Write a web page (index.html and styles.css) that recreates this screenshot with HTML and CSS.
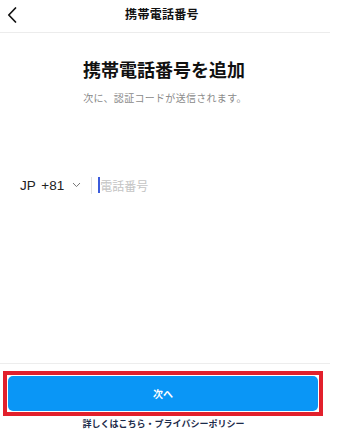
FILE: index.html
```html
<!DOCTYPE html>
<html lang="ja">
<head>
<meta charset="utf-8">
<link rel="stylesheet" href="styles.css">
</head>
<body>
<div class="page">
  <header class="topbar">
    <svg class="back" width="10" height="16" viewBox="0 0 10 16"><path d="M8.5 1 L1.8 8 L8.5 15" fill="none" stroke="#111" stroke-width="1.7" stroke-linecap="round" stroke-linejoin="round"/></svg>
    <div class="title">携帯電話番号</div>
  </header>
  <main class="content">
    <h1 class="heading">携帯電話番号を追加</h1>
    <p class="sub">次に、認証コードが送信されます。</p>
    <div class="phone">
      <span class="cc">JP +81</span>
      <svg class="chev" width="9" height="6" viewBox="0 0 9 6"><path d="M1 1 L4.5 4.6 L8 1" fill="none" stroke="#777" stroke-width="1"/></svg>
      <span class="sep"></span>
      <span class="caret"></span>
      <span class="ph">電話番号</span>
    </div>
  </main>
  <footer class="bottom">
    <div class="hl">
      <button class="next">次へ</button>
    </div>
    <div class="links">詳しくはこちら・プライバシーポリシー</div>
  </footer>
</div>
</body>
</html>
```
FILE: styles.css
```css
html, body {
  margin: 0;
  padding: 0;
  background: #fff;
}
body {
  font-family: "Liberation Sans", "Noto Sans CJK JP", sans-serif;
  color: #111;
}
.page {
  width: 340px;
  height: 438px;
  display: flex;
  flex-direction: column;
}
.topbar {
  position: relative;
  height: 32px;
  width: 330px;
  border-bottom: 1px solid #ececec;
  display: flex;
  align-items: center;
  justify-content: center;
}
.back {
  position: absolute;
  left: 7px;
  top: 7px;
}
.title {
  font-size: 12px;
  font-weight: bold;
  letter-spacing: 0.3px;
  margin-top: -6px;
  margin-left: -6px;
}
.content {
  flex: 1;
  width: 330px;
  display: flex;
  flex-direction: column;
}
.heading {
  margin: 26px 0 0;
  text-align: center;
  font-size: 18px;
  line-height: 24px;
  font-weight: bold;
  margin-left: -2px;
}
.sub {
  margin: 9px 0 0;
  text-align: center;
  font-size: 10px;
  line-height: 14px;
  color: #8a8a8a;
  letter-spacing: 0.3px;
}
.phone {
  margin-top: 69px;
  height: 20px;
  display: flex;
  align-items: center;
  padding-left: 20px;
}
.cc {
  font-size: 13.5px;
  color: #222;
  word-spacing: 2px;
}
.chev {
  margin-left: 8px;
}
.sep {
  width: 1px;
  height: 17px;
  background: #e2e2e2;
  margin-left: 10px;
}
.caret {
  width: 2px;
  height: 16px;
  background: #3b5bdb;
  margin-left: 6px;
}
.ph {
  font-size: 12px;
  color: #c4c4c4;
  margin-left: 0;
}
.bottom {
  border-top: 1px solid #ededed;
  width: 330px;
  padding-top: 7px;
  height: 67px;
}
.hl {
  margin-left: 3px;
  width: 310px;
  border: 4px solid #e2202c;
  padding: 1px;
}
.next {
  display: block;
  width: 100%;
  height: 35px;
  border: none;
  border-radius: 5px;
  background: #0a96f6;
  color: #fff;
  font-family: "Liberation Sans", "Noto Sans CJK JP", sans-serif;
  font-size: 10px;
  font-weight: bold;
}
.links {
  margin-top: 2px;
  text-align: center;
  font-size: 9px;
  line-height: 12px;
  font-weight: bold;
  color: #1c2b4a;
  margin-left: -3px;
}
```
